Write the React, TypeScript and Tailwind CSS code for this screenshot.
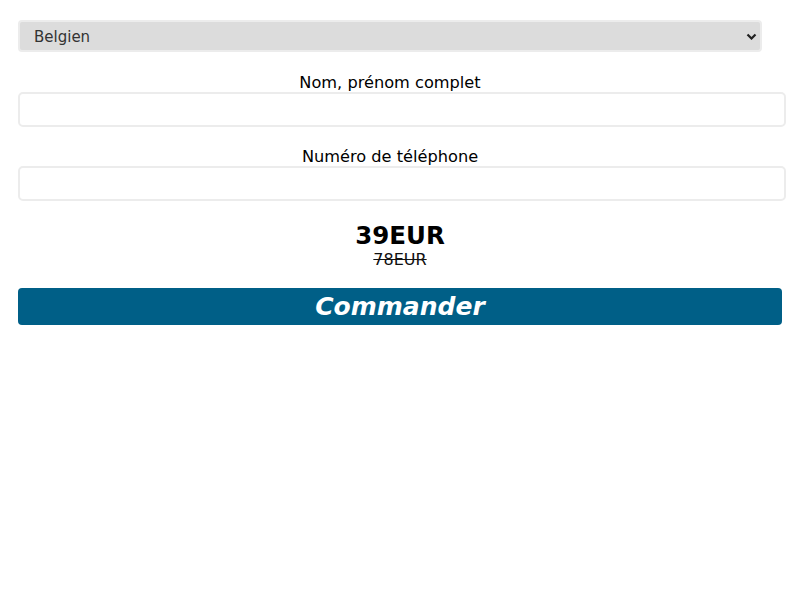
import React from 'react'

export default function App() {
  return (
    <div className="w-[800px] h-[600px] bg-white px-[18px] pt-[20px]" style={{ fontFamily: '"DejaVu Sans", sans-serif' }}>
      {/* Country select */}
      <div className="relative w-[744px]">
        <select
          defaultValue="BE"
          className="appearance-none w-full h-[32px] bg-[#dcdcdc] border-2 border-[#ececec] rounded-[4px] pl-[14px] pt-[3px] text-[15px] text-[#333] outline-none"
        >
          <option value="BE">Belgien</option>
        </select>
        <svg className="absolute right-[5px] top-[13px] pointer-events-none" width="11" height="7" viewBox="0 0 11 7">
          <path d="M1.5 1.5 L5.5 5.5 L9.5 1.5" fill="none" stroke="#222" strokeWidth="2.2" />
        </svg>
      </div>

      {/* Name */}
      <div className="mt-[22px] flex flex-col items-start">
        <label className="w-[744px] text-center text-[16.2px] leading-[18px] text-black">Nom, prénom complet</label>
        <input className="w-[768px] h-[35px] border-2 border-[#ececec] rounded-[5px] outline-none px-2" />
      </div>

      {/* Phone */}
      <div className="mt-[21px] flex flex-col items-start">
        <label className="w-[744px] text-center text-[16.2px] leading-[18px] text-black">Numéro de téléphone</label>
        <input className="w-[768px] h-[35px] border-2 border-[#ececec] rounded-[5px] outline-none px-2" />
      </div>

      {/* Price */}
      <div className="mt-[21px] flex flex-col items-center w-[764px]">
        <div className="text-[24.5px] leading-[28px] font-bold text-black">39EUR</div>
        <div className="mt-[1px] text-[16px] leading-[18px] line-through text-[#111]">78EUR</div>
      </div>

      <button className="mt-[19px] w-[764px] h-[37px] bg-[#005f87] rounded-[4px] text-white text-[25px] font-bold italic leading-[36px]">
        Commander
      </button>
    </div>
  )
}
